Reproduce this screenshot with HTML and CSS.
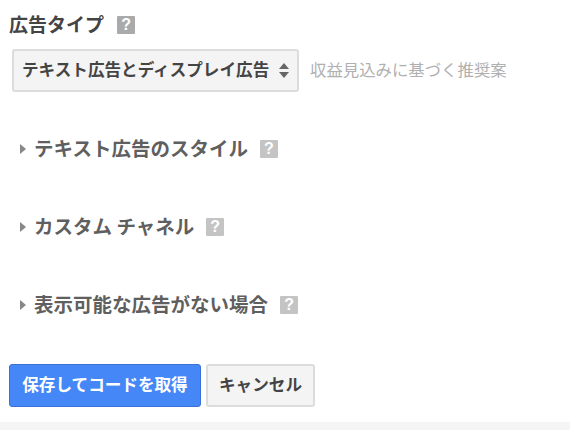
FILE: index.html
```html
<!DOCTYPE html>
<html lang="ja">
  <head>
    <meta charset="UTF-8" />
    <title>広告タイプ</title>
    <link rel="stylesheet" href="styles.css">
  </head>
  <body>
    <section class="adType">
      <h2 class="adTitle"><span>広告タイプ</span> <span class="help">?</span></h2>
      <div class="selectRow">
        <div class="selectBox">
          <span class="selectText">テキスト広告とディスプレイ広告</span>
          <span class="arrows"></span>
        </div>
        <span class="hint">収益見込みに基づく推奨案</span>
      </div>
    </section>

    <div class="group">
      <span class="caret"></span>
      <h3>テキスト広告のスタイル</h3>
      <span class="help light">?</span>
    </div>
    <div class="group">
      <span class="caret"></span>
      <h3>カスタム チャネル</h3>
      <span class="help light">?</span>
    </div>
    <div class="group">
      <span class="caret"></span>
      <h3>表示可能な広告がない場合</h3>
      <span class="help light">?</span>
    </div>

    <div class="buttons">
      <button class="saveBtn" type="button">保存してコードを取得</button>
      <button class="cancelBtn" type="button">キャンセル</button>
    </div>
    <div class="footerBar"></div>
  </body>
</html>
```

FILE: styles.css
```css
* {
  margin: 0;
  padding: 0;
  box-sizing: border-box;
  font-family: "Noto Sans CJK JP", "Liberation Sans", sans-serif;
}

html,
body {
  width: 570px;
  height: 430px;
  overflow: hidden;
  background-color: #fff;
}

.adType {
  padding: 13px 0 0 9px;
}

.adTitle {
  display: flex;
  align-items: center;
  gap: 13px;
  height: 24px;
  font-size: 19px;
  font-weight: 700;
  color: #444;
}

.adTitle span:first-child {
  margin-bottom: 3px;
}

.help {
  display: inline-flex;
  justify-content: center;
  align-items: center;
  width: 18px;
  height: 18px;
  border-radius: 1px;
  background-color: #aaa;
  color: #fff;
  font-family: "Liberation Sans", sans-serif;
  font-size: 16px;
  font-weight: 700;
}

.help.light {
  background-color: #c4c4c4;
}

.selectRow {
  display: flex;
  align-items: center;
  gap: 11px;
  margin: 12px 0 0 3px;
}

.selectBox {
  display: flex;
  align-items: center;
  justify-content: space-between;
  width: 287px;
  height: 43px;
  padding: 0 8px 0 8px;
  border: 2px solid #dcdcdc;
  border-radius: 3px;
  background-color: #f4f4f4;
  font-size: 16.6px;
  font-weight: 700;
  color: #444;
  white-space: nowrap;
}

.selectText {
  margin-bottom: 3px;
}

.arrows {
  display: flex;
  flex-direction: column;
  gap: 3px;
}

.arrows::before,
.arrows::after {
  content: "";
  border-left: 5px solid transparent;
  border-right: 5px solid transparent;
}

.arrows::before {
  border-bottom: 6px solid #666;
}

.arrows::after {
  border-top: 6px solid #666;
}

.hint {
  font-size: 16.4px;
  color: #b0b0b0;
  margin-bottom: 3px;
}

.group {
  display: flex;
  align-items: center;
  height: 30px;
  margin: 42px 0 0 20px;
  color: #5f5f5f;
}

.group + .group {
  margin-top: 48px;
}

.group h3 {
  margin: 0 12px 3px 8px;
  font-size: 19.5px;
  font-weight: 700;
}

.caret {
  border-left: 6px solid #888;
  border-top: 5px solid transparent;
  border-bottom: 5px solid transparent;
}

.buttons {
  display: flex;
  gap: 5px;
  margin: 44px 0 0 9px;
}

button {
  height: 43px;
  padding-bottom: 3px;
  border-radius: 3px;
  font-size: 16.6px;
  font-weight: 700;
}

.saveBtn {
  width: 192px;
  border: 1px solid #3a70d8;
  background-color: #4587f6;
  color: #fff;
}

.cancelBtn {
  width: 109px;
  border: 2px solid #dcdcdc;
  background-color: #f4f4f4;
  color: #444;
}

.footerBar {
  height: 8px;
  margin-top: 15px;
  background-color: #f5f5f5;
}
```
